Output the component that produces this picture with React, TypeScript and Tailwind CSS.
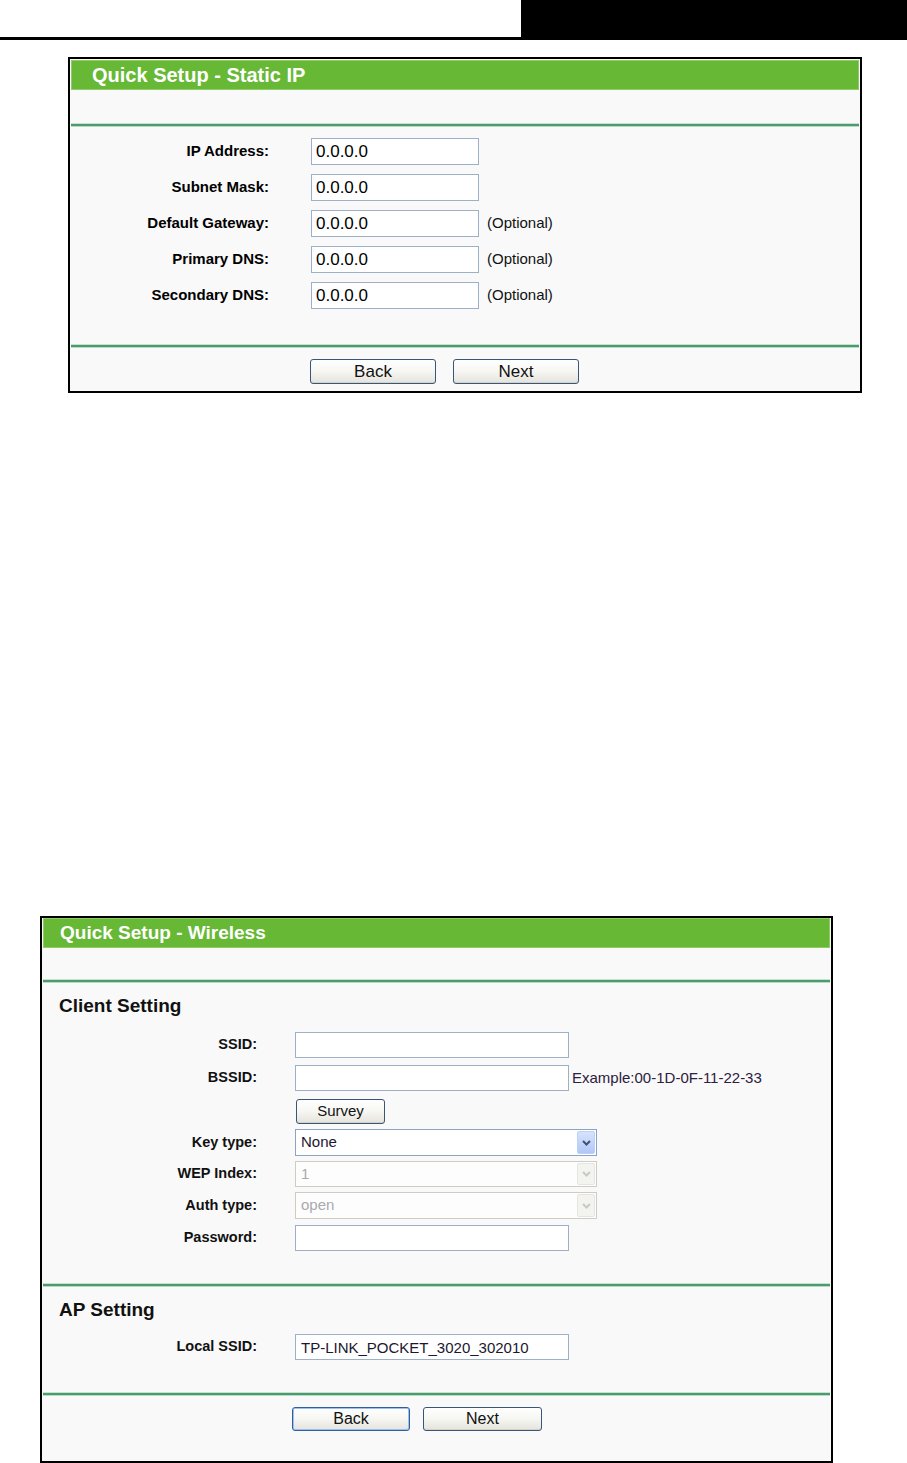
import React from "react";

const F = { fontFamily: '"Liberation Sans", Arial, sans-serif' };

function Chevron({ color }: { color: string }) {
  return (
    <svg width="9" height="6" viewBox="0 0 9 6">
      <path d="M1 1 L4.5 4.5 L8 1" fill="none" stroke={color} strokeWidth="2" />
    </svg>
  );
}

function Select({ value, disabled, h }: { value: string; disabled?: boolean; h: string }) {
  return (
    <div
      className={`flex items-stretch w-[302px] ${h} border ${
        disabled ? "border-[#cfcdc2] bg-[#fdfdfd]" : "border-[#8ba4c4] bg-white"
      }`}
    >
      <div
        className={`flex-1 flex items-center pl-[5px] text-[15px] ${
          disabled ? "text-[#aaa9ad]" : "text-[#1c1730]"
        }`}
      >
        {value}
      </div>
      <div
        className={`m-[1px] w-[18px] flex items-center justify-center rounded-[2px] border ${
          disabled
            ? "bg-[#f3f3ef] border-[#e6e5df]"
            : "bg-linear-to-b from-[#d6e3fd] to-[#b2c7f7] border-[#bcd0f8]"
        }`}
      >
        <Chevron color={disabled ? "#c9c9c5" : "#3f5175"} />
      </div>
    </div>
  );
}

function Btn({ label, w, h, size, focus }: { label: string; w: string; h: string; size: string; focus?: boolean }) {
  return (
    <div
      className={`${w} ${h} ${size} flex items-center justify-center rounded-[3px] border text-[#111] bg-linear-to-b from-white via-[#f6f6f2] to-[#e4e3dc] ${
        focus
          ? "border-[#2f5f9e] shadow-[inset_0_0_0_1px_#9fc0ee]"
          : "border-[#3a5578] shadow-[inset_0_-1px_0_#d4d2c8]"
      }`}
    >
      {label}
    </div>
  );
}

function Sep() {
  return <div className="mx-[1px] h-[2px] bg-[#4d9a6e] shadow-[0_1px_0_#b7dbc4,0_-1px_0_#c6e3d0]" />;
}

function Row1({ label, optional }: { label: string; optional?: boolean }) {
  return (
    <div className="flex items-center h-[27px]">
      <div className="w-[199px] text-right font-bold text-[15px] text-black">{label}</div>
      <input
        readOnly
        defaultValue="0.0.0.0"
        className="ml-[42px] w-[168px] h-[27px] border border-[#9cb1c8] bg-white px-[4px] text-[17px] text-black outline-none"
        style={F}
      />
      {optional && <span className="ml-[8px] text-[15px] text-[#111]">(Optional)</span>}
    </div>
  );
}

function Label2({ children }: { children: React.ReactNode }) {
  return <div className="w-[215px] text-right font-bold text-[14.5px] text-[#111]">{children}</div>;
}

function Input2({ value, h = "h-[26px]" }: { value?: string; h?: string }) {
  return (
    <input
      readOnly
      defaultValue={value ?? ""}
      className={`w-[274px] ${h} border border-[#9cb1c8] bg-white px-[5px] text-[15px] text-[#1c1730] outline-none`}
      style={F}
    />
  );
}

export default function App() {
  return (
    <div className="w-[907px] h-[1463px] bg-white overflow-hidden" style={F}>
      <div className="flex h-[40px]">
        <div className="flex-1 border-b-[3px] border-black" />
        <div className="w-[386px] bg-black" />
      </div>

      {/* Panel 1 */}
      <div className="mt-[17px] ml-[68px] w-[794px] border-2 border-black bg-[#f9f9f9] flex flex-col">
        <div className="mx-[1px] mt-[1px] h-[30px] bg-[#66b835] border border-[#8fcc69] flex items-center pl-[20px]">
          <span className="text-white font-bold text-[20px]">Quick Setup - Static IP</span>
        </div>
        <div className="h-[34px]" />
        <Sep />
        <div className="pt-[12px] flex flex-col gap-[9px]">
          <Row1 label="IP Address:" />
          <Row1 label="Subnet Mask:" />
          <Row1 label="Default Gateway:" optional />
          <Row1 label="Primary DNS:" optional />
          <Row1 label="Secondary DNS:" optional />
        </div>
        <div className="h-[36px]" />
        <Sep />
        <div className="mt-[12px] mb-[7px] flex pl-[240px] gap-[17px]">
          <Btn label="Back" w="w-[126px]" h="h-[25px]" size="text-[17px]" />
          <Btn label="Next" w="w-[126px]" h="h-[25px]" size="text-[17px]" />
        </div>
      </div>

      {/* Panel 2 */}
      <div className="mt-[523px] ml-[40px] w-[793px] h-[547px] border-2 border-black bg-[#f9f9f9] flex flex-col">
        <div className="mx-[1px] h-[30px] bg-[#66b835] border border-[#8fcc69] flex items-center pl-[16px]">
          <span className="text-white font-bold text-[19px]">Quick Setup - Wireless</span>
        </div>
        <div className="h-[32px]" />
        <Sep />
        <div className="mt-[12px] h-[24px] flex items-center pl-[17px] font-bold text-[19px] text-[#111]">Client Setting</div>

        <div className="mt-[14px] flex items-center">
          <Label2>SSID:</Label2>
          <div className="ml-[38px]"><Input2 /></div>
        </div>
        <div className="mt-[7px] flex items-center">
          <Label2>BSSID:</Label2>
          <div className="ml-[38px]"><Input2 /></div>
          <span className="ml-[3px] text-[15px] text-[#2d2040]">Example:00-1D-0F-11-22-33</span>
        </div>
        <div className="mt-[8px] flex items-center">
          <div className="w-[215px]" />
          <div className="ml-[39px]">
            <Btn label="Survey" w="w-[89px]" h="h-[25px]" size="text-[15px]" />
          </div>
        </div>
        <div className="mt-[5px] flex items-center">
          <Label2>Key type:</Label2>
          <div className="ml-[38px]"><Select value="None" h="h-[27px]" /></div>
        </div>
        <div className="mt-[5px] flex items-center">
          <Label2>WEP Index:</Label2>
          <div className="ml-[38px]"><Select value="1" disabled h="h-[26px]" /></div>
        </div>
        <div className="mt-[5px] flex items-center">
          <Label2>Auth type:</Label2>
          <div className="ml-[38px]"><Select value="open" disabled h="h-[27px]" /></div>
        </div>
        <div className="mt-[6px] flex items-center">
          <Label2>Password:</Label2>
          <div className="ml-[38px]"><Input2 /></div>
        </div>

        <div className="h-[33px]" />
        <Sep />
        <div className="mt-[12px] h-[24px] flex items-center pl-[17px] font-bold text-[19px] text-[#111]">AP Setting</div>
        <div className="mt-[12px] flex items-center">
          <Label2>Local SSID:</Label2>
          <div className="ml-[38px]"><Input2 value="TP-LINK_POCKET_3020_302010" /></div>
        </div>
        <div className="h-[33px]" />
        <Sep />
        <div className="mt-[12px] flex pl-[250px] gap-[13px]">
          <Btn label="Back" w="w-[118px]" h="h-[24px]" size="text-[16px]" focus />
          <Btn label="Next" w="w-[119px]" h="h-[24px]" size="text-[16px]" />
        </div>
      </div>
    </div>
  );
}
